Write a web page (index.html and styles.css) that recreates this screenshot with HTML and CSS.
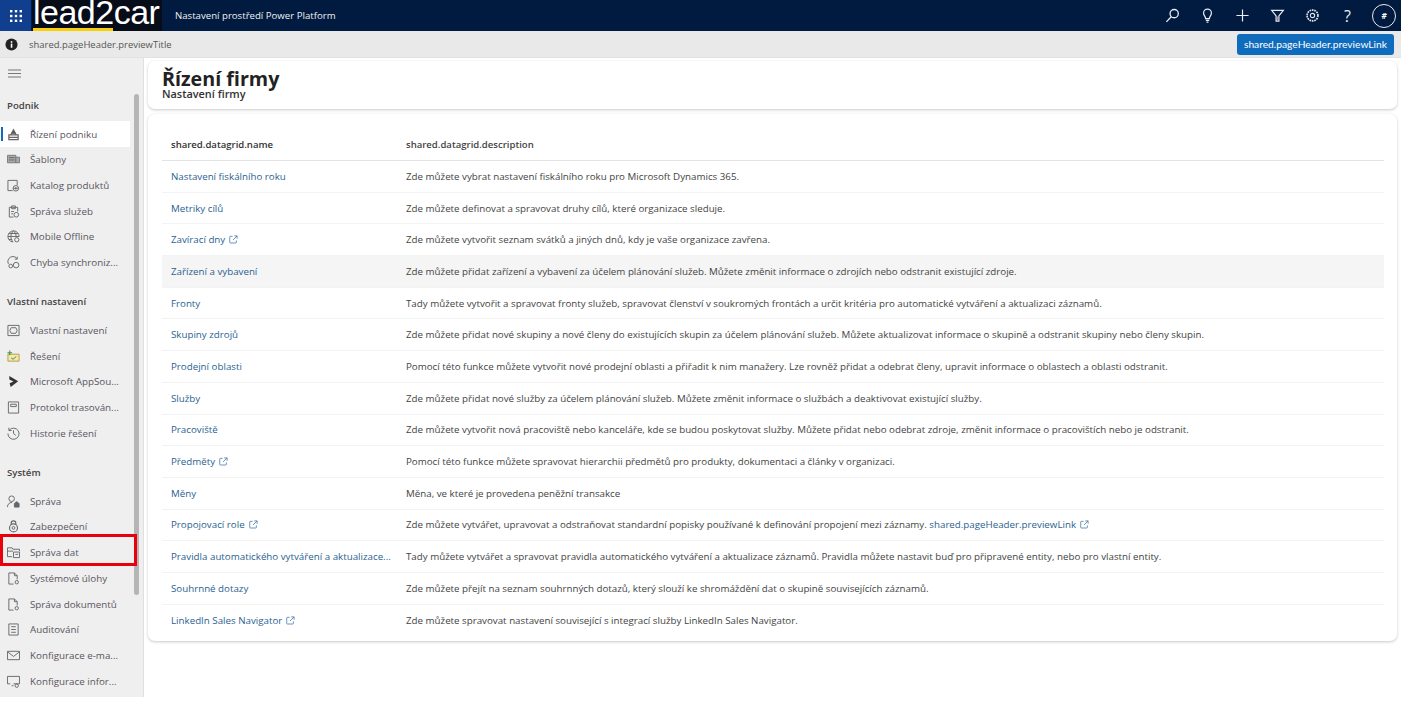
FILE: index.html
```html
<!DOCTYPE html>
<html lang="cs">
<head>
<meta charset="utf-8">
<title>Řízení firmy</title>
<link rel="stylesheet" href="styles.css">
</head>
<body>
<svg class="defs" width="0" height="0">
  <defs>
    <symbol id="ext" viewBox="0 0 10 10"><path d="M4 1.500H1.500A.7.7 0 0 0 .8 2.200v6a.7.7 0 0 0 .7.7h6a.7.7 0 0 0 .7-.7V6M5.800 1H9v3.200M9 1 4.500 5.500" fill="none" stroke="currentColor" stroke-width=".9"/></symbol>
  </defs>
</svg>
<header class="topbar">
  <div class="waffle">
    <svg width="12" height="12" viewBox="0 0 12 12" fill="#fff"><rect x="0" y="0" width="2.400" height="2.400"/><rect x="4.800" y="0" width="2.400" height="2.400"/><rect x="9.600" y="0" width="2.400" height="2.400"/><rect x="0" y="4.800" width="2.400" height="2.400"/><rect x="4.800" y="4.800" width="2.400" height="2.400"/><rect x="9.600" y="4.800" width="2.400" height="2.400"/><rect x="0" y="9.600" width="2.400" height="2.400"/><rect x="4.800" y="9.600" width="2.400" height="2.400"/><rect x="9.600" y="9.600" width="2.400" height="2.400"/></svg>
  </div>
  <div class="logo"><span class="logo-text">lead2car</span><span class="logo-line"></span></div>
  <div class="app-title">Nastavení prostředí Power Platform</div>
  <div class="top-icons">
    <svg class="ti" viewBox="0 0 16 16" fill="none" stroke="#e8ecf3" stroke-width="1.400"><circle cx="9.800" cy="6" r="4.400"/><path d="M6.600 9.400 1.500 14.800"/></svg>
    <svg class="ti" viewBox="0 0 16 16" fill="none" stroke="#e8ecf3" stroke-width="1.300"><path d="M6 11.300C6 9 3.800 8.300 3.800 5.400a4.200 4.200 0 0 1 8.400 0c0 2.900-2.200 3.600-2.200 5.900zM6.200 13.300h3.600M7 15h2"/></svg>
    <svg class="ti" viewBox="0 0 16 16" fill="none" stroke="#e8ecf3" stroke-width="1.300"><path d="M1.500 8h13M8 1.500v13"/></svg>
    <svg class="ti" viewBox="0 0 16 16" fill="none" stroke-width="1.300"><path d="M1.800 2.500h12.400L9.500 8.500v5.500h-3V8.500z" stroke="#e8ecf3"/><path d="M7.200 9h1.600v4.300H7.200z" fill="#9a86a8"/></svg>
    <svg class="ti" viewBox="0 0 16 16" fill="none" stroke="#dfe4ec"><circle cx="8" cy="8" r="5.800" stroke-width="1.800" stroke-dasharray="1.800 .8"/><circle cx="8" cy="8" r="2.300" stroke-width="1.200"/></svg>
    <span class="help">?</span>
    <span class="avatar">#</span>
  </div>
</header>
<div class="preview-bar">
  <svg class="info" viewBox="0 0 14 14"><circle cx="7" cy="7" r="6.500" fill="#222"/><rect x="6.200" y="6" width="1.700" height="4.500" fill="#fff"/><rect x="6.200" y="3.400" width="1.700" height="1.700" fill="#fff"/></svg>
  <span class="preview-title">shared.pageHeader.previewTitle</span>
  <a class="preview-btn">shared.pageHeader.previewLink</a>
</div>
<div class="body">
  <nav class="sidebar">
    <div class="toggle"><svg width="13" height="9" viewBox="0 0 13 9" stroke="#777" stroke-width="1"><path d="M0 1h13M0 4.500h13M0 8h13"/></svg></div>
    <div class="group">
      <div class="group-label">Podnik</div>
      <a class="item active"><svg class="ni" viewBox="0 0 14 14"><path d="M2 12.500v-5h10v5zM2 10h10M4 7.500 7 2l3 5.500" stroke-width="1.300"/><path d="M4.800 6 7 2.500 9.200 6z" fill="#555"/></svg><span>Řízení podniku</span></a>
      <a class="item"><svg class="ni" viewBox="0 0 14 14"><path class="grey" d="M.5 2.500h9v8h-9z"/><path class="grey" d="M9.500 4.500h4v6h-4z"/><path d="M2 5h6M2 7.500h6"/></svg><span>Šablony</span></a>
      <a class="item"><svg class="ni" viewBox="0 0 14 14"><path d="M6 12.500H1V1.500h10v5"/><circle cx="9.500" cy="10" r="3"/><path d="M9.500 8.500v3M6.800 10h5.400"/></svg><span>Katalog produktů</span></a>
      <a class="item"><svg class="ni" viewBox="0 0 14 14"><path d="M2.500 2.500h9V7M2.500 2.500V13H7M5 1h4v3H5zM4.500 7h3M4.500 9.500h2"/><circle cx="10" cy="10.500" r="2.500"/></svg><span>Správa služeb</span></a>
      <a class="item"><svg class="ni" viewBox="0 0 14 14"><path d="M6 12.900A6 6 0 1 1 13 7"/><path d="M7 1C5 2.500 4.200 4.700 4.200 7s.8 4.500 2.300 6M7 1c2 1.500 2.800 3.700 2.800 6M1 7h12M2 3.800h10M2 10.200h3.500"/><circle cx="10.500" cy="10.500" r="2.300"/></svg><span>Mobile Offline</span></a>
      <a class="item"><svg class="ni" viewBox="0 0 14 14"><path d="M1.500 8.500A5.500 5.500 0 0 1 11 3M11 .8v2.600H8.400"/><circle cx="4" cy="10.800" r="2"/><circle cx="9.800" cy="9.800" r="3"/></svg><span>Chyba synchroniz...</span></a>
    </div>
    <div class="group">
      <div class="group-label">Vlastní nastavení</div>
      <a class="item"><svg class="ni" viewBox="0 0 14 14"><path d="M1 1.500h12v11H1z"/><path d="M4.500 4h5L11 7 9.500 10h-5L3 7z"/></svg><span>Vlastní nastavení</span></a>
      <a class="item"><svg class="ni" viewBox="0 0 14 14"><path class="sol-a" d="M1 4.500h12v7.500H1z"/><path class="sol-b" d="M4.500 8.500 6.500 10 10 7M3 .5v5M.5 3h5"/></svg><span>Řešení</span></a>
      <a class="item"><svg class="ni ni-fill" viewBox="0 0 14 14"><path d="M2.500 1 12 6.800 4 12.800 2.800 9 7 7 2.500 4.800z"/></svg><span>Microsoft AppSou...</span></a>
      <a class="item"><svg class="ni" viewBox="0 0 14 14"><path d="M1.500 1h11v12h-11zM4 3.500h6V6H4z"/></svg><span>Protokol trasován...</span></a>
      <a class="item"><svg class="ni" viewBox="0 0 14 14"><path d="M2.300 3.500A6 6 0 1 1 1 7M2 .8v3h3M7 3.500V7l2.500 2"/></svg><span>Historie řešení</span></a>
    </div>
    <div class="group">
      <div class="group-label">Systém</div>
      <a class="item"><svg class="ni" viewBox="0 0 14 14"><circle cx="5" cy="4" r="3"/><path d="M.5 13c0-3 2-5 5-5"/><path class="dark" d="M8 9h5v4H8zM9.500 9V7.500h2V9"/></svg><span>Správa</span></a>
      <a class="item"><svg class="ni" viewBox="0 0 14 14"><path d="M4.500 5V3.500a2.500 2.500 0 0 1 5 0V5" stroke-width="1.200"/><circle cx="7" cy="8.500" r="4.300" stroke-width="1.200"/><circle cx="7" cy="8.500" r="1.500"/></svg><span>Zabezpečení</span></a>
      <a class="item"><svg class="ni" viewBox="0 0 14 14"><path d="M.5 11.500V2h5l1 1.500h7v2M.5 11.500h5M.5 5.500h6"/><path d="M7 6.500h6.500v6H7zM9 9h3"/></svg><span>Správa dat</span></a>
      <a class="item"><svg class="ni" viewBox="0 0 14 14"><path d="M7 13H2V1h6l3 3v4M8 1v3h3"/><circle cx="10.500" cy="11" r="1.800"/></svg><span>Systémové úlohy</span></a>
      <a class="item"><svg class="ni" viewBox="0 0 14 14"><path d="M7 13H2V1h6l3 3v4M8 1v3h3"/><circle cx="10.500" cy="11" r="1.800"/></svg><span>Správa dokumentů</span></a>
      <a class="item"><svg class="ni" viewBox="0 0 14 14"><path d="M2 1h10v12H2zM4.500 4h5M4.500 7h5M4.500 10h5"/></svg><span>Auditování</span></a>
      <a class="item"><svg class="ni" viewBox="0 0 14 14"><path d="M.5 2.500h13v9H.5zM.5 3 7 8l6.500-5"/></svg><span>Konfigurace e-ma...</span></a>
      <a class="item"><svg class="ni" viewBox="0 0 14 14"><path d="M7 9.500h6.500v-8H.5v8h3M5 11.500h2"/><circle cx="10.500" cy="11.500" r="1.800"/></svg><span>Konfigurace infor...</span></a>
    </div>
    <span class="scroll-thumb"></span>
    <span class="mark"></span>
  </nav>
  <main class="main">
    <section class="card head-card">
      <h1>Řízení firmy</h1>
      <h2>Nastavení firmy</h2>
    </section>
    <section class="card table-card">
      <div class="row row-head"><div class="c-name">shared.datagrid.name</div><div class="c-desc">shared.datagrid.description</div></div>
      <div class="row"><div class="c-name"><a>Nastavení fiskálního roku</a></div><div class="c-desc">Zde můžete vybrat nastavení fiskálního roku pro Microsoft Dynamics 365.</div></div>
      <div class="row"><div class="c-name"><a>Metriky cílů</a></div><div class="c-desc">Zde můžete definovat a spravovat druhy cílů, které organizace sleduje.</div></div>
      <div class="row"><div class="c-name"><a>Zavírací dny</a><svg class="ext"><use href="#ext"/></svg></div><div class="c-desc">Zde můžete vytvořit seznam svátků a jiných dnů, kdy je vaše organizace zavřena.</div></div>
      <div class="row hover"><div class="c-name"><a>Zařízení a vybavení</a></div><div class="c-desc">Zde můžete přidat zařízení a vybavení za účelem plánování služeb. Můžete změnit informace o zdrojích nebo odstranit existující zdroje.</div></div>
      <div class="row"><div class="c-name"><a>Fronty</a></div><div class="c-desc">Tady můžete vytvořit a spravovat fronty služeb, spravovat členství v soukromých frontách a určit kritéria pro automatické vytváření a aktualizaci záznamů.</div></div>
      <div class="row"><div class="c-name"><a>Skupiny zdrojů</a></div><div class="c-desc">Zde můžete přidat nové skupiny a nové členy do existujících skupin za účelem plánování služeb. Můžete aktualizovat informace o skupině a odstranit skupiny nebo členy skupin.</div></div>
      <div class="row"><div class="c-name"><a>Prodejní oblasti</a></div><div class="c-desc">Pomocí této funkce můžete vytvořit nové prodejní oblasti a přiřadit k nim manažery. Lze rovněž přidat a odebrat členy, upravit informace o oblastech a oblasti odstranit.</div></div>
      <div class="row"><div class="c-name"><a>Služby</a></div><div class="c-desc">Zde můžete přidat nové služby za účelem plánování služeb. Můžete změnit informace o službách a deaktivovat existující služby.</div></div>
      <div class="row"><div class="c-name"><a>Pracoviště</a></div><div class="c-desc">Zde můžete vytvořit nová pracoviště nebo kanceláře, kde se budou poskytovat služby. Můžete přidat nebo odebrat zdroje, změnit informace o pracovištích nebo je odstranit.</div></div>
      <div class="row"><div class="c-name"><a>Předměty</a><svg class="ext"><use href="#ext"/></svg></div><div class="c-desc">Pomocí této funkce můžete spravovat hierarchii předmětů pro produkty, dokumentaci a články v organizaci.</div></div>
      <div class="row"><div class="c-name"><a>Měny</a></div><div class="c-desc">Měna, ve které je provedena peněžní transakce</div></div>
      <div class="row"><div class="c-name"><a>Propojovací role</a><svg class="ext"><use href="#ext"/></svg></div><div class="c-desc">Zde můžete vytvářet, upravovat a odstraňovat standardní popisky používané k definování propojení mezi záznamy. <a class="desc-link">shared.pageHeader.previewLink</a><svg class="ext"><use href="#ext"/></svg></div></div>
      <div class="row"><div class="c-name"><a>Pravidla automatického vytváření a aktualizace...</a></div><div class="c-desc">Tady můžete vytvářet a spravovat pravidla automatického vytváření a aktualizace záznamů. Pravidla můžete nastavit buď pro připravené entity, nebo pro vlastní entity.</div></div>
      <div class="row"><div class="c-name"><a>Souhrnné dotazy</a></div><div class="c-desc">Zde můžete přejít na seznam souhrnných dotazů, který slouží ke shromáždění dat o skupině souvisejících záznamů.</div></div>
      <div class="row last"><div class="c-name"><a>LinkedIn Sales Navigator</a><svg class="ext"><use href="#ext"/></svg></div><div class="c-desc">Zde můžete spravovat nastavení související s integrací služby LinkedIn Sales Navigator.</div></div>
    </section>
  </main>
</div>
</body>
</html>
```
FILE: styles.css
```css
* { box-sizing: border-box; }
html, body { margin: 0; height: 100%; }
body {
  width: 1401px;
  height: 701px;
  overflow: hidden;
  background: #fff;
  font-family: "Open Sans", "Noto Sans", sans-serif;
  font-size: 9.750px;
  color: #333;
  display: flex;
  flex-direction: column;
}
.defs { position: absolute; }
.topbar {
  height: 31px;
  flex: none;
  display: flex;
  align-items: center;
  background: #011a3f;
  color: #fff;
}
.waffle {
  width: 31px;
  height: 31px;
  flex: none;
  background: #0f3f8e;
  display: flex;
  align-items: center;
  justify-content: center;
}
.logo {
  width: 130px;
  height: 31px;
  flex: none;
  margin-left: 1px;
  padding-left: 1px;
  background: #060c18;
  overflow: hidden;
  display: flex;
  flex-direction: column;
  align-items: flex-start;
}
.logo-text {
  font-family: "Liberation Sans", sans-serif;
  font-size: 34px;
  letter-spacing: -.5px;
  line-height: 25px;
  height: 28px;
  color: #fff;
  white-space: nowrap;
}
.logo-line { width: 80px; height: 3px; background: #f7cf0a; flex: none; }
.app-title { margin-left: 13px; font-size: 9.650px; color: #eef1f6; }
.top-icons { margin-left: auto; display: flex; align-items: center; gap: 20px; padding-right: 5px; }
.ti { width: 15px; height: 15px; display: block; flex: none; }
.help { font-size: 16px; width: 15px; text-align: center; line-height: 16px; color: #e8ecf3; }
.avatar {
  width: 24px; height: 24px; border: 1px solid #e8ecf3; border-radius: 50%;
  display: flex; align-items: center; justify-content: center;
  font-size: 8px; font-weight: 700; font-style: italic; margin-left: -3px;
}
.preview-bar {
  height: 27px;
  flex: none;
  display: flex;
  align-items: center;
  padding: 0 7px 0 5px;
  background: #e9e9e9;
  border-bottom: 1px solid #e2e2e2;
}
.info { width: 13px; height: 13px; margin-right: 11px; }
.preview-title { color: #555; font-size: 9.450px; }
.preview-btn {
  margin-left: auto;
  height: 21px;
  padding: 0 7px;
  display: flex;
  align-items: center;
  border-radius: 3px;
  background: #0f6cbd;
  color: #fff;
  font-family: "Lato", sans-serif;
  font-size: 10.250px;
}
.body { flex: none; display: flex; height: 639px; }
.sidebar {
  width: 144px;
  height: 639px;
  flex: none;
  position: relative;
  background: #efefef;
  border-right: 1px solid #e0e0e0;
  overflow: hidden;
}
.toggle { height: 31px; padding-left: 8px; display: flex; align-items: center; }
.group { margin-bottom: 10px; }
.group-label {
  height: 32.300px;
  padding-left: 7px;
  display: flex;
  align-items: center;
  font-weight: 600;
  font-size: 9.600px;
  color: #444;
}
.item {
  height: 25.700px;
  display: flex;
  align-items: center;
  padding-left: 7px;
  color: #5a5560;
  font-size: 9.800px;
  margin-right: 13px;
  white-space: nowrap;
  position: relative;
}
.item.active { background: #fff; }
.item.active::before {
  content: "";
  position: absolute;
  left: 1px; top: 6px; bottom: 6px; width: 2px;
  background: #0f6cbd;
}
.ni {
  width: 13px; height: 13px; margin-right: 10px; flex: none;
  fill: none; stroke: #666; stroke-width: 1;
}
.ni-fill { fill: #333; stroke: none; }
.grey { fill: #aaa; stroke: #777; }
.sol-a { stroke: #b89b3c; fill: #f3e7b2; }
.sol-b { stroke: #2e8b3e; }
.dark { fill: #666; }
.scroll-thumb {
  position: absolute;
  left: 134px; top: 36px;
  width: 5px; height: 501px;
  background: #b5b5b5;
  border-radius: 3px;
}
.mark {
  position: absolute;
  left: 0; top: 476px;
  width: 137px; height: 32px;
  border: 3px solid #e8000d;
}
.main { flex: 1; padding: 3px 4px 0 4px; min-width: 0; background: #fff; }
.card {
  background: #fff;
  border-radius: 7px;
  box-shadow: 0 1px 3px rgba(0,0,0,.22);
}
.head-card { height: 48px; padding: 9px 14px 0; margin-bottom: 5px; }
h1 { margin: 0; font-size: 19.700px; line-height: 18px; font-weight: 700; color: #222; }
h2 { margin: 0; font-size: 10.900px; line-height: 12px; font-weight: 600; color: #333; }
.table-card { height: 527px; padding: 14px 13px 0 14px; }
.row {
  height: 31.700px;
  display: flex;
  align-items: center;
  border-bottom: 1px solid #f3f3f3;
  white-space: nowrap;
}
.row.last { border-bottom: 0; }
.row.hover { background: #f5f5f5; }
.row-head { height: 33px; border-bottom-color: #e3e3e3; font-weight: 600; font-size: 9.550px; color: #333; }
.c-name { width: 244px; flex: none; padding-left: 9px; display: flex; align-items: center; }
.c-name a, .desc-link { color: #2c5f92; }
.c-desc { display: flex; align-items: center; color: #444; white-space: pre-wrap; }
.ext { width: 9px; height: 9px; margin-left: 4px; color: #4a7cae; flex: none; }
```
